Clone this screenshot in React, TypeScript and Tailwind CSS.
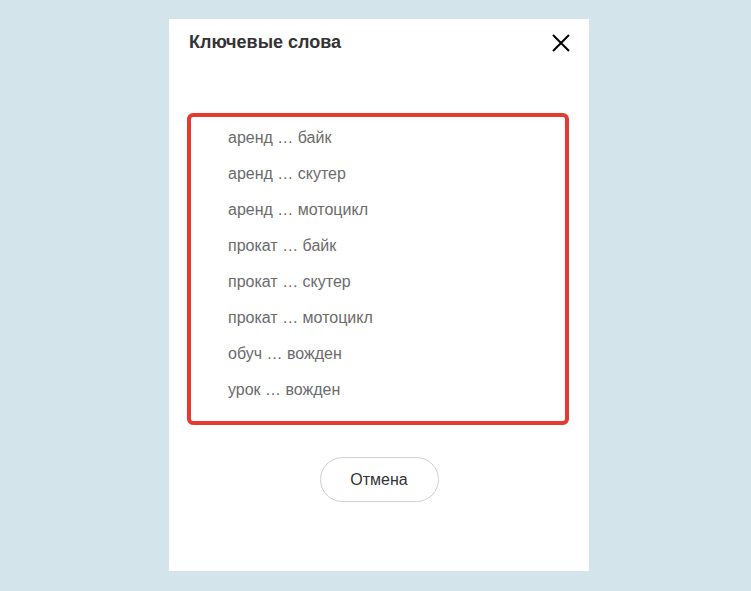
const keywords = [
  "аренд … байк",
  "аренд … скутер",
  "аренд … мотоцикл",
  "прокат … байк",
  "прокат … скутер",
  "прокат … мотоцикл",
  "обуч … вожден",
  "урок … вожден",
];

export default function App() {
  return (
    <div
      className="min-h-[591px] w-full bg-[#d4e4eb] pt-[19px] pl-[169px]"
      style={{ fontFamily: '"Liberation Sans", Arial, sans-serif' }}
    >
      {/* Modal */}
      <div className="flex h-[552px] w-[420px] flex-col bg-white">
        {/* Header */}
        <div className="flex h-[94px] items-start justify-between pl-[20px] pr-[18px] pt-[11px]">
          <h2 className="text-[18px] leading-[24px] font-bold text-[#333]">Ключевые слова</h2>
          <button className="mt-[3px] text-black" aria-label="Закрыть">
            <svg width="20" height="20" viewBox="0 0 20 20" fill="none" stroke="currentColor" strokeWidth="2">
              <path d="M2 2 L18 18 M18 2 L2 18" />
            </svg>
          </button>
        </div>

        {/* Keyword list */}
        <div className="ml-[18px] w-[382px] rounded-[6px] border-4 border-[#e63a2e] pt-[3px] pb-[13px] pl-[37px]">
          <ul className="flex flex-col">
            {keywords.map((k) => (
              <li key={k} className="h-[36px] text-[16px] leading-[36px] text-[#6b6b6b]">
                {k}
              </li>
            ))}
          </ul>
        </div>

        {/* Footer */}
        <div className="flex justify-center pt-[32px]">
          <button className="h-[45px] w-[119px] rounded-full border border-[#cfcfcf] text-[16px] text-[#333]">
            Отмена
          </button>
        </div>
      </div>
    </div>
  );
}
